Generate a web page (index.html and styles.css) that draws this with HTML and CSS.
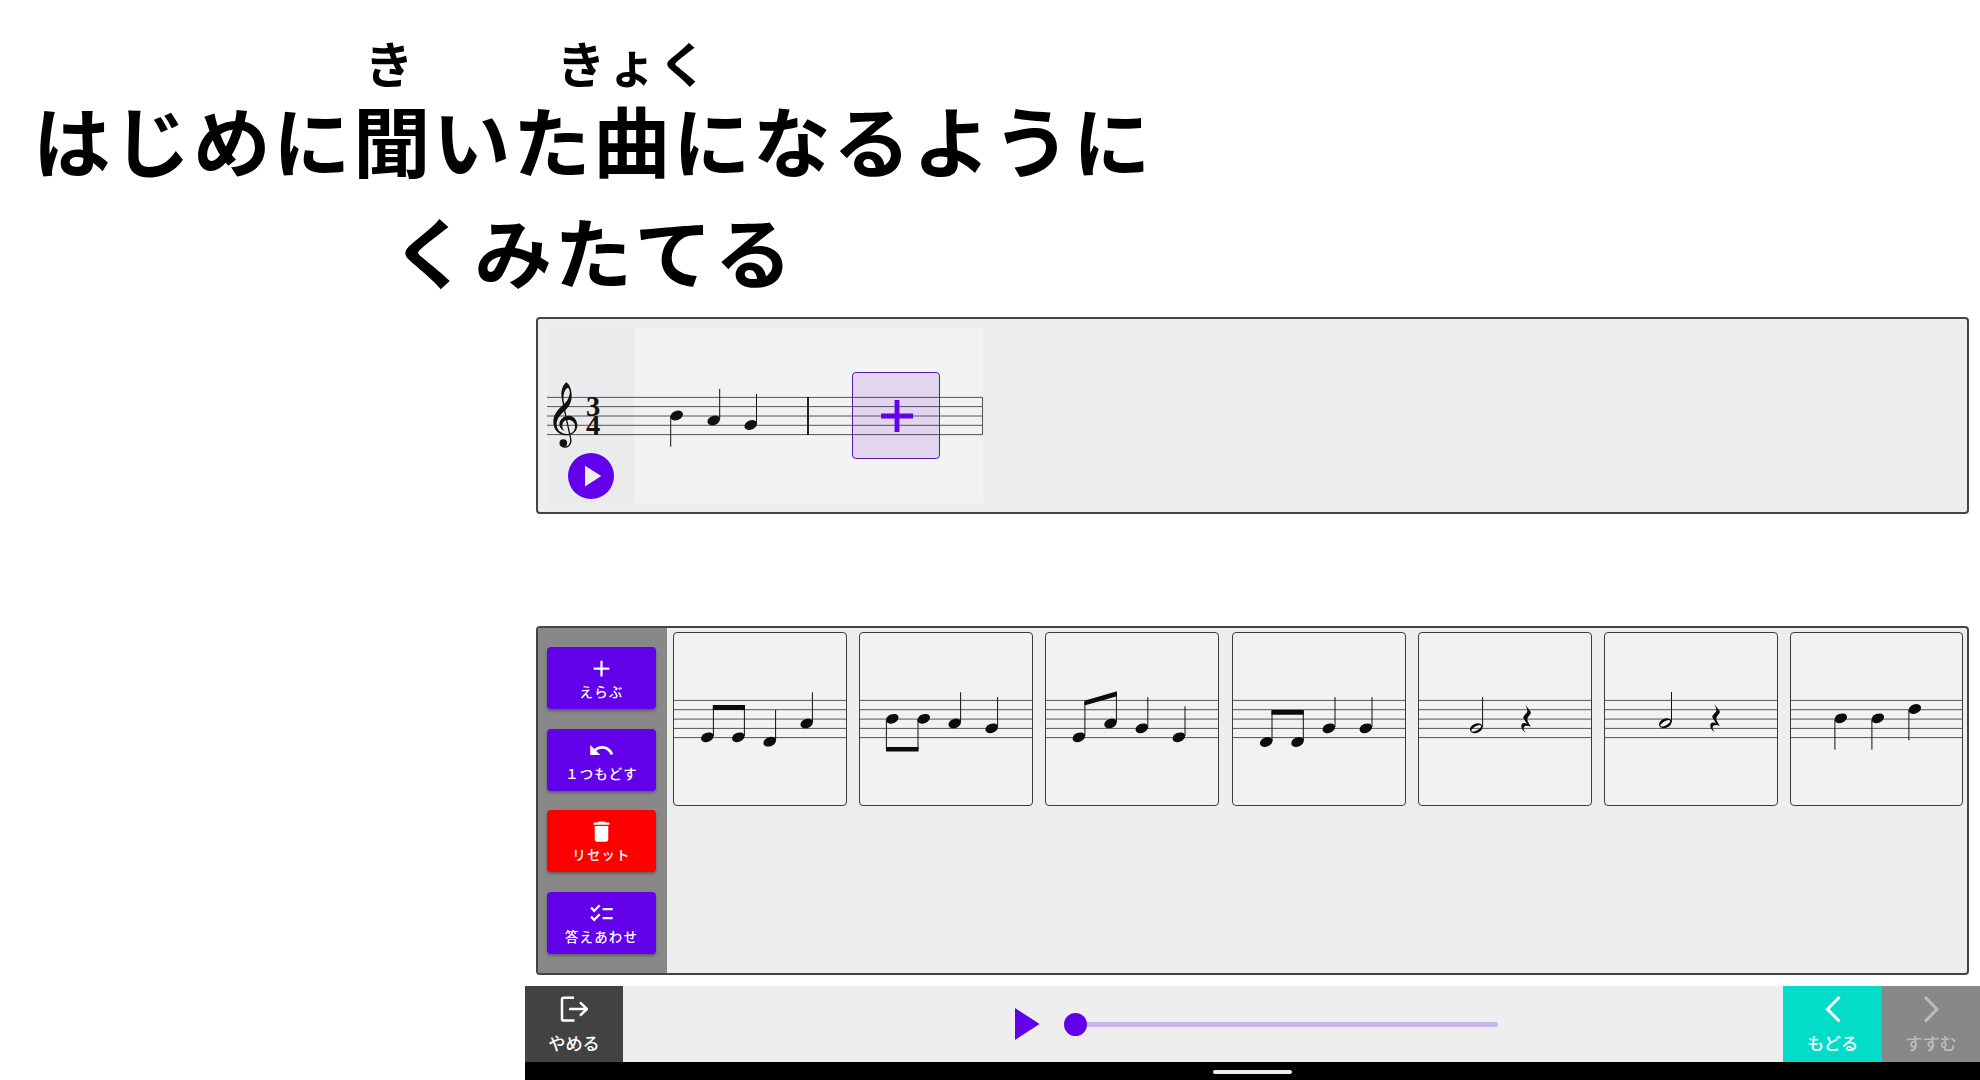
FILE: index.html
```
<!DOCTYPE html>
<html lang="ja">
<head>
<meta charset="utf-8">
<title>おんがくパズル</title>
<link rel="stylesheet" href="styles.css">
</head>
<body>
<svg class="defs" width="0" height="0" aria-hidden="true">
  <defs>
    <ellipse id="head" rx="6.5" ry="4.6" transform="rotate(-22)"/>
    <g id="half">
      <path fill-rule="evenodd" transform="rotate(-22)" d="M-6.6 0a6.6 4.6 0 1 0 13.2 0a6.6 4.6 0 1 0-13.2 0zM-5.6 .6C-5-1.8 4.6-3.6 5.6-.6C5 1.8-4.6 3.6-5.6 .6z"/>
    </g>
    <path id="rest" transform="scale(.3333)" d="M13 0L29 21C33 28 18 36 19 45C20 52 26 59 30 67C21 61 10 62 8 70C7 76 11 81 15 84C5 80 0 71 1 62C3 53 13 54 19 59L8 42C3 33 19 27 19 19C19 12 16 7 13 0z"/>
    <path id="staff" d="M0 68.4H174M0 77.7H174M0 87.1H174M0 96.4H174M0 105.6H174"/>
  </defs>
</svg>
<main class="page">
  <h1 class="title">
    <span class="line">はじめに<span class="kanji">聞<span class="furigana single">き</span></span>いた<span class="kanji">曲<span class="furigana">きょく</span></span>になるように</span>
    <span class="line">くみたてる</span>
  </h1>
  <div class="workspace">
    <section class="panel score">
      <div class="sheet">
        <div class="clef-area"></div>
        <svg class="notation" width="436" height="175" viewBox="0 0 436 175">
          <path class="rule" d="M0 69.4H436M0 78.6H436M0 88H436M0 97.3H436M0 106.6H436M435.5 69V107"/>
          <g transform="scale(.33333) translate(-66 -54)">
            <path fill-rule="evenodd" d="M124 217C112 226 107 245 110 262C111 272 113 280 114 285C99 298 84 315 85 338C86 362 105 377 127 376C146 375 157 362 157 346C157 330 146 317 132 317C115 317 103 330 103 343C103 352 110 360 119 363C113 356 111 350 112 344C113 336 119 330 130 330C142 330 151 338 150 351C149 365 139 372 126 372C108 372 95 360 95 343C95 327 106 314 118 304C133 291 141 275 140 253C139 238 134 223 124 217zM118 281C113 262 115 240 129 233C136 240 135 250 132 259C130 268 125 275 118 281z"/>
            <path fill="none" stroke="#111" stroke-width="4" d="M115 284L137 386C140 403 130 412 118 411C111 410 107 406 106 401"/>
            <circle cx="115" cy="399" r="11.5"/>
          </g>
          <text class="meter" x="46.2" y="88">3</text>
          <text class="meter" x="46.2" y="107">4</text>
          <use href="#head" x="129.7" y="87.5"/><use href="#head" x="166.7" y="92.4"/><use href="#head" x="203.7" y="97"/>
          <path class="stem" d="M123.7 88V118.7M172.7 91V61M209.5 96V66"/>
          <path stroke="#000" stroke-width="1.7" d="M261 69V107"/>
        </svg>
        <button class="slot" aria-label="ついか"><svg width="32" height="32" viewBox="0 0 32 32"><path stroke="#6200ea" stroke-width="4.8" d="M16 0V32M0 16H32"/></svg></button>
        <button class="play-round" aria-label="さいせい"><svg width="46" height="46" viewBox="0 0 46 46"><path fill="#eee" d="M17 12.7V33.5L33.3 23z"/></svg></button>
      </div>
    </section>
    <section class="panel picker">
      <nav class="tools">
        <button class="tool"><svg viewBox="0 0 24 24"><path d="M19 13h-6v6h-2v-6H5v-2h6V5h2v6h6v2z"/></svg><span>えらぶ</span></button>
        <button class="tool"><svg viewBox="0 0 24 24"><path d="M12.5 8c-2.65 0-5.05.99-6.9 2.6L2 7v9h9l-3.62-3.62c1.39-1.16 3.16-1.88 5.12-1.88 3.54 0 6.55 2.31 7.6 5.5l2.37-.78C21.08 11.03 17.15 8 12.5 8z"/></svg><span>１つもどす</span></button>
        <button class="tool danger"><svg viewBox="0 0 24 24"><path d="M6 19c0 1.1.9 2 2 2h8c1.1 0 2-.9 2-2V7H6v12zM19 4h-3.5l-1-1h-5l-1 1H5v2h14V4z"/></svg><span>リセット</span></button>
        <button class="tool"><svg viewBox="0 0 24 24"><path d="M22 7h-9v2h9V7zm0 8h-9v2h9v-2zM5.54 11L2 7.46l1.41-1.41 2.12 2.12 4.24-4.24 1.41 1.41L5.54 11zm0 8L2 15.46l1.41-1.41 2.12 2.12 4.24-4.24 1.41 1.41L5.54 19z"/></svg><span>答えあわせ</span></button>
      </nav>
      <div class="cards">
        <div class="card"><svg viewBox="1 1 172 172"><use class="rule" href="#staff"/>
          <use href="#head" x="34.3" y="105.3"/><use href="#head" x="65.3" y="105.3"/><use href="#head" x="96.7" y="109.7"/><use href="#head" x="133.7" y="91.4"/>
          <path class="stem" d="M40.4 104V75M71.4 104V75M102.6 108V78M139.4 90V60.3"/><path d="M39.8 73H72V78H39.8z"/></svg></div>
        <div class="card"><svg viewBox="1 1 172 172"><use class="rule" href="#staff"/>
          <use href="#head" x="33.3" y="86.8"/><use href="#head" x="64.7" y="86.8"/><use href="#head" x="95.7" y="91.4"/><use href="#head" x="132.7" y="96.3"/>
          <path class="stem" d="M27.4 88V117M59 88V117M101.6 90V60.3M138.6 95V65"/><path d="M27 115H59.6V119.6H27z"/></svg></div>
        <div class="card"><svg viewBox="1 1 172 172"><use class="rule" href="#staff"/>
          <use href="#head" x="33.8" y="105.3"/><use href="#head" x="65.5" y="91.4"/><use href="#head" x="96.8" y="96.3"/><use href="#head" x="133.8" y="105.3"/>
          <path class="stem" d="M39.9 104V70M71.4 90V61M102.8 95V65M140 104V74.3"/><path d="M39.4 68.7L72 59.3V64.3L39.4 73.5z"/></svg></div>
        <div class="card"><svg viewBox="1 1 172 172"><use class="rule" href="#staff"/>
          <use href="#head" x="34.2" y="110"/><use href="#head" x="65.5" y="110"/><use href="#head" x="96.8" y="96.3"/><use href="#head" x="133.8" y="96.3"/>
          <path class="stem" d="M40 109V79M71.3 109V79M103 95V65M140 95V65"/><path d="M39.5 78H71.8V82.7H39.5z"/></svg></div>
        <div class="card"><svg viewBox="1 1 172 172"><use class="rule" href="#staff"/>
          <use href="#half" x="58.3" y="96.3"/><path class="stem" d="M64.6 95V65"/><use href="#rest" x="103" y="72.7"/></svg></div>
        <div class="card"><svg viewBox="1 1 172 172"><use class="rule" href="#staff"/>
          <use href="#half" x="61.3" y="91.3"/><path class="stem" d="M67.5 90V60"/><use href="#rest" x="106" y="72"/></svg></div>
        <div class="card"><svg viewBox="1 1 172 172"><use class="rule" href="#staff"/>
          <use href="#head" x="50.8" y="86.3"/><use href="#head" x="87.8" y="86.3"/><use href="#head" x="124.8" y="77"/>
          <path class="stem" d="M44.9 88V117.7M81.9 88V117.7M118.9 78V108.3"/></svg></div>
      </div>
    </section>
    <footer class="bar">
      <button class="nav quit"><svg viewBox="0 0 28 28"><path d="M14 2.7H3.6C2.5 2.7 2 3.2 2 4.3V24.2C2 25 2.5 25.5 3.6 25.5H14.5M9 14H26.5M20 7.3L27 14L20 20.7"/></svg><span>やめる</span></button>
      <div class="player">
        <svg width="25" height="32" viewBox="0 0 25 32"><path fill="#6200ea" d="M0 0L24.6 16L0 32z"/></svg>
        <div class="slider"><span class="thumb"></span><span class="track"></span></div>
      </div>
      <button class="nav back"><svg viewBox="0 0 28 28"><path d="M20.5 2L8.5 14.2L20.5 26.5"/></svg><span>もどる</span></button>
      <button class="nav next"><svg viewBox="0 0 28 28"><path d="M8 2L20 14.2L8 26.5"/></svg><span>すすむ</span></button>
    </footer>
    <div class="system"><span class="home"></span></div>
  </div>
</main>
</body>
</html>
```
FILE: styles.css
```
* { box-sizing: border-box; }
body {
  margin: 0;
  background: #fff;
  color: #000;
  font-family: "Noto Sans CJK JP", sans-serif;
  overflow: hidden;
}
button { border: 0; padding: 0; margin: 0; font: inherit; color: inherit; }
svg { display: block; flex: none; }
.defs { position: absolute; }
.page { width: 1980px; height: 1080px; display: flex; flex-direction: column; }
.title {
  margin: 0;
  width: 1186px;
  height: 317px;
  padding-top: 83px;
  font-size: 77.5px;
  line-height: 111px;
  font-weight: 700;
  letter-spacing: 2.5px;
  text-align: center;
  white-space: nowrap;
}
.line { display: block; }
.kanji { position: relative; display: inline-block; }
.furigana {
  position: absolute;
  left: 50%;
  top: -46px;
  transform: translateX(-50%);
  font-size: 49px;
  line-height: 50px;
  letter-spacing: 2px;
}
.single { margin-left: -3px; }
.workspace {
  width: 1455px;
  margin-left: 525px;
  height: 763px;
  display: flex;
  flex-direction: column;
}
.panel {
  margin: 0 11px;
  border: 2px solid #444;
  border-radius: 4px;
  background: #eee;
}
.score { height: 197px; padding: 9px; }
.sheet { position: relative; width: 436px; height: 175px; background: #f1f3f2; }
.clef-area { width: 87px; height: 175px; background: #eaebed; }
.notation { position: absolute; left: 0; top: 0; fill: #111; }
.rule { stroke: #555; stroke-width: 1; fill: none; }
.stem { stroke: #111; stroke-width: 1; fill: none; }
.meter { font: bold 28.5px "Liberation Serif", serif; text-anchor: middle; }
.slot {
  position: absolute;
  left: 305px;
  top: 44px;
  width: 88px;
  height: 87px;
  padding-left: 1px;
  display: flex;
  align-items: center;
  justify-content: center;
  border: 1.5px solid #5a18a8;
  border-radius: 4px;
  background: #e2d8ee;
  background: rgba(114, 0, 220, .12);
}
.play-round {
  position: absolute;
  left: 21px;
  top: 125px;
  width: 46px;
  height: 46px;
  border-radius: 50%;
  background: #6200ea;
}
.picker { height: 349px; margin-top: 112px; margin-bottom: 11px; display: flex; }
.tools {
  width: 129px;
  padding: 19px 11px 19px 9px;
  background: #888;
  display: flex;
  flex-direction: column;
  justify-content: space-between;
}
.tool {
  height: 62px;
  padding-top: 8px;
  border-radius: 4px;
  background: #6200ea;
  color: #fff;
  display: flex;
  flex-direction: column;
  align-items: center;
  font-size: 13.4px;
  line-height: 18px;
  font-weight: 500;
  letter-spacing: 1.2px;
  box-shadow: 0 2px 3px rgba(0, 0, 0, .3);
}
.tool svg { width: 27px; height: 27px; fill: #fff; }
.danger { background: #f00; }
.cards { padding: 4px 0 0 6px; display: flex; gap: 12.2px; align-items: flex-start; }
.card {
  flex: none;
  width: 174px;
  height: 174px;
  border: 1px solid #3c3c3c;
  border-radius: 4px;
  background: #f1f3f2;
  overflow: hidden;
}
.card:last-child { width: 173px; }
.card svg { width: 172px; height: 172px; fill: #0c0c0c; }
.bar { height: 76px; display: flex; background: #eee; }
.nav {
  display: flex;
  flex-direction: column;
  align-items: center;
  color: #fff;
  font-size: 17.2px;
  line-height: 26px;
  font-weight: 500;
  padding-top: 9px;
}
.nav svg { width: 28px; height: 28px; margin-bottom: 7px; fill: none; stroke: currentColor; stroke-width: 3; }
.quit { width: 98px; background: #424242; }
.quit svg { stroke-width: 2.5; }
.back { width: 99px; background: #03dcc8; }
.next { width: 98px; background: #888; color: #bcbcbc; }
.player { flex: 1; padding-left: 392px; display: flex; align-items: center; }
.slider { width: 434px; margin-left: 24px; display: flex; align-items: center; }
.thumb { width: 23px; height: 23px; border-radius: 50%; background: #6200ea; }
.track { flex: 1; height: 5px; border-radius: 0 2px 2px 0; background: #c9b6e8; }
.system { flex: 1; background: #000; display: flex; justify-content: center; padding-top: 8px; }
.home { width: 79px; height: 4px; border-radius: 2px; background: #eee; }
```
